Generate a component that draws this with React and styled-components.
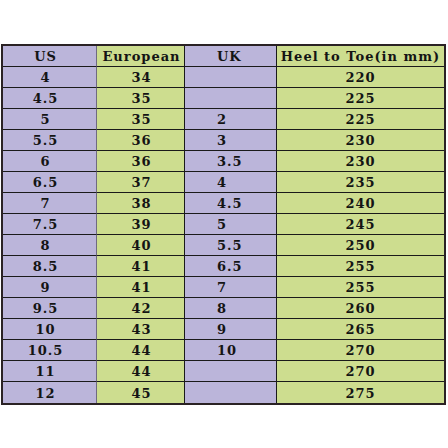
import React from 'react';
import styled, { createGlobalStyle } from 'styled-components';

const GlobalStyle = createGlobalStyle`
  html, body {
    margin: 0;
    padding: 0;
    background: #ffffff;
  }
  body {
    font-family: 'DejaVu Serif', 'Liberation Serif', serif;
  }
`;

const colours = {
  purple: '#bbb5da',
  green: '#cddd8f',
  line: '#1a1a1a',
  text: '#141414',
};

const Page = styled.div`
  width: 448px;
  height: 448px;
  padding: 44px 2px 0 1px;
  box-sizing: border-box;
`;

const Table = styled.div`
  border: 2px solid #2a2224;
  display: grid;
  grid-template-columns: 94px 88px 92px 1fr;
  grid-template-rows: 21px repeat(16, 21px);
  width: 100%;
  box-sizing: border-box;
`;

const Cell = styled.div`
  background: ${(props) => colours[props.tone]};
  border-bottom: ${(props) => (props.last ? 'none' : `1px solid ${colours.line}`)};
  border-right: ${(props) =>
    props.edge ? 'none' : `1px solid ${props.soft ? '#6f6a80' : colours.line}`};
  color: ${colours.text};
  display: flex;
  align-items: flex-end;
  justify-content: ${(props) => (props.align === 'left' ? 'flex-start' : 'center')};
  padding: 0 ${(props) => props.padRight || 0}px 1px ${(props) => props.padLeft || 0}px;
  font-size: 13px;
  font-weight: 700;
  letter-spacing: 1px;
  line-height: 16px;
  white-space: nowrap;
  overflow: hidden;
  box-sizing: border-box;
`;

const rows = [
  ['4', '34', '', '220'],
  ['4.5', '35', '', '225'],
  ['5', '35', '2', '225'],
  ['5.5', '36', '3', '230'],
  ['6', '36', '3.5', '230'],
  ['6.5', '37', '4', '235'],
  ['7', '38', '4.5', '240'],
  ['7.5', '39', '5', '245'],
  ['8', '40', '5.5', '250'],
  ['8.5', '41', '6.5', '255'],
  ['9', '41', '7', '255'],
  ['9.5', '42', '8', '260'],
  ['10', '43', '9', '265'],
  ['10.5', '44', '10', '270'],
  ['11', '44', '', '270'],
  ['12', '45', '', '275'],
];

const columns = [
  { tone: 'purple', padRight: 8, soft: true },
  { tone: 'green', padLeft: 2 },
  { tone: 'purple', align: 'left', padLeft: 32 },
  { tone: 'green', edge: true },
];

const headers = ['US', 'European', 'UK', 'Heel to Toe(in mm)'];

const App = () => (
  <Page>
    <GlobalStyle />
    <Table>
      {headers.map((label, i) => (
        <Cell key={label} {...columns[i]}>
          {label}
        </Cell>
      ))}
      {rows.map((row, r) =>
        row.map((value, i) => (
          <Cell key={`${r}-${i}`} last={r === rows.length - 1} {...columns[i]}>
            {value}
          </Cell>
        ))
      )}
    </Table>
  </Page>
);

export default App;
